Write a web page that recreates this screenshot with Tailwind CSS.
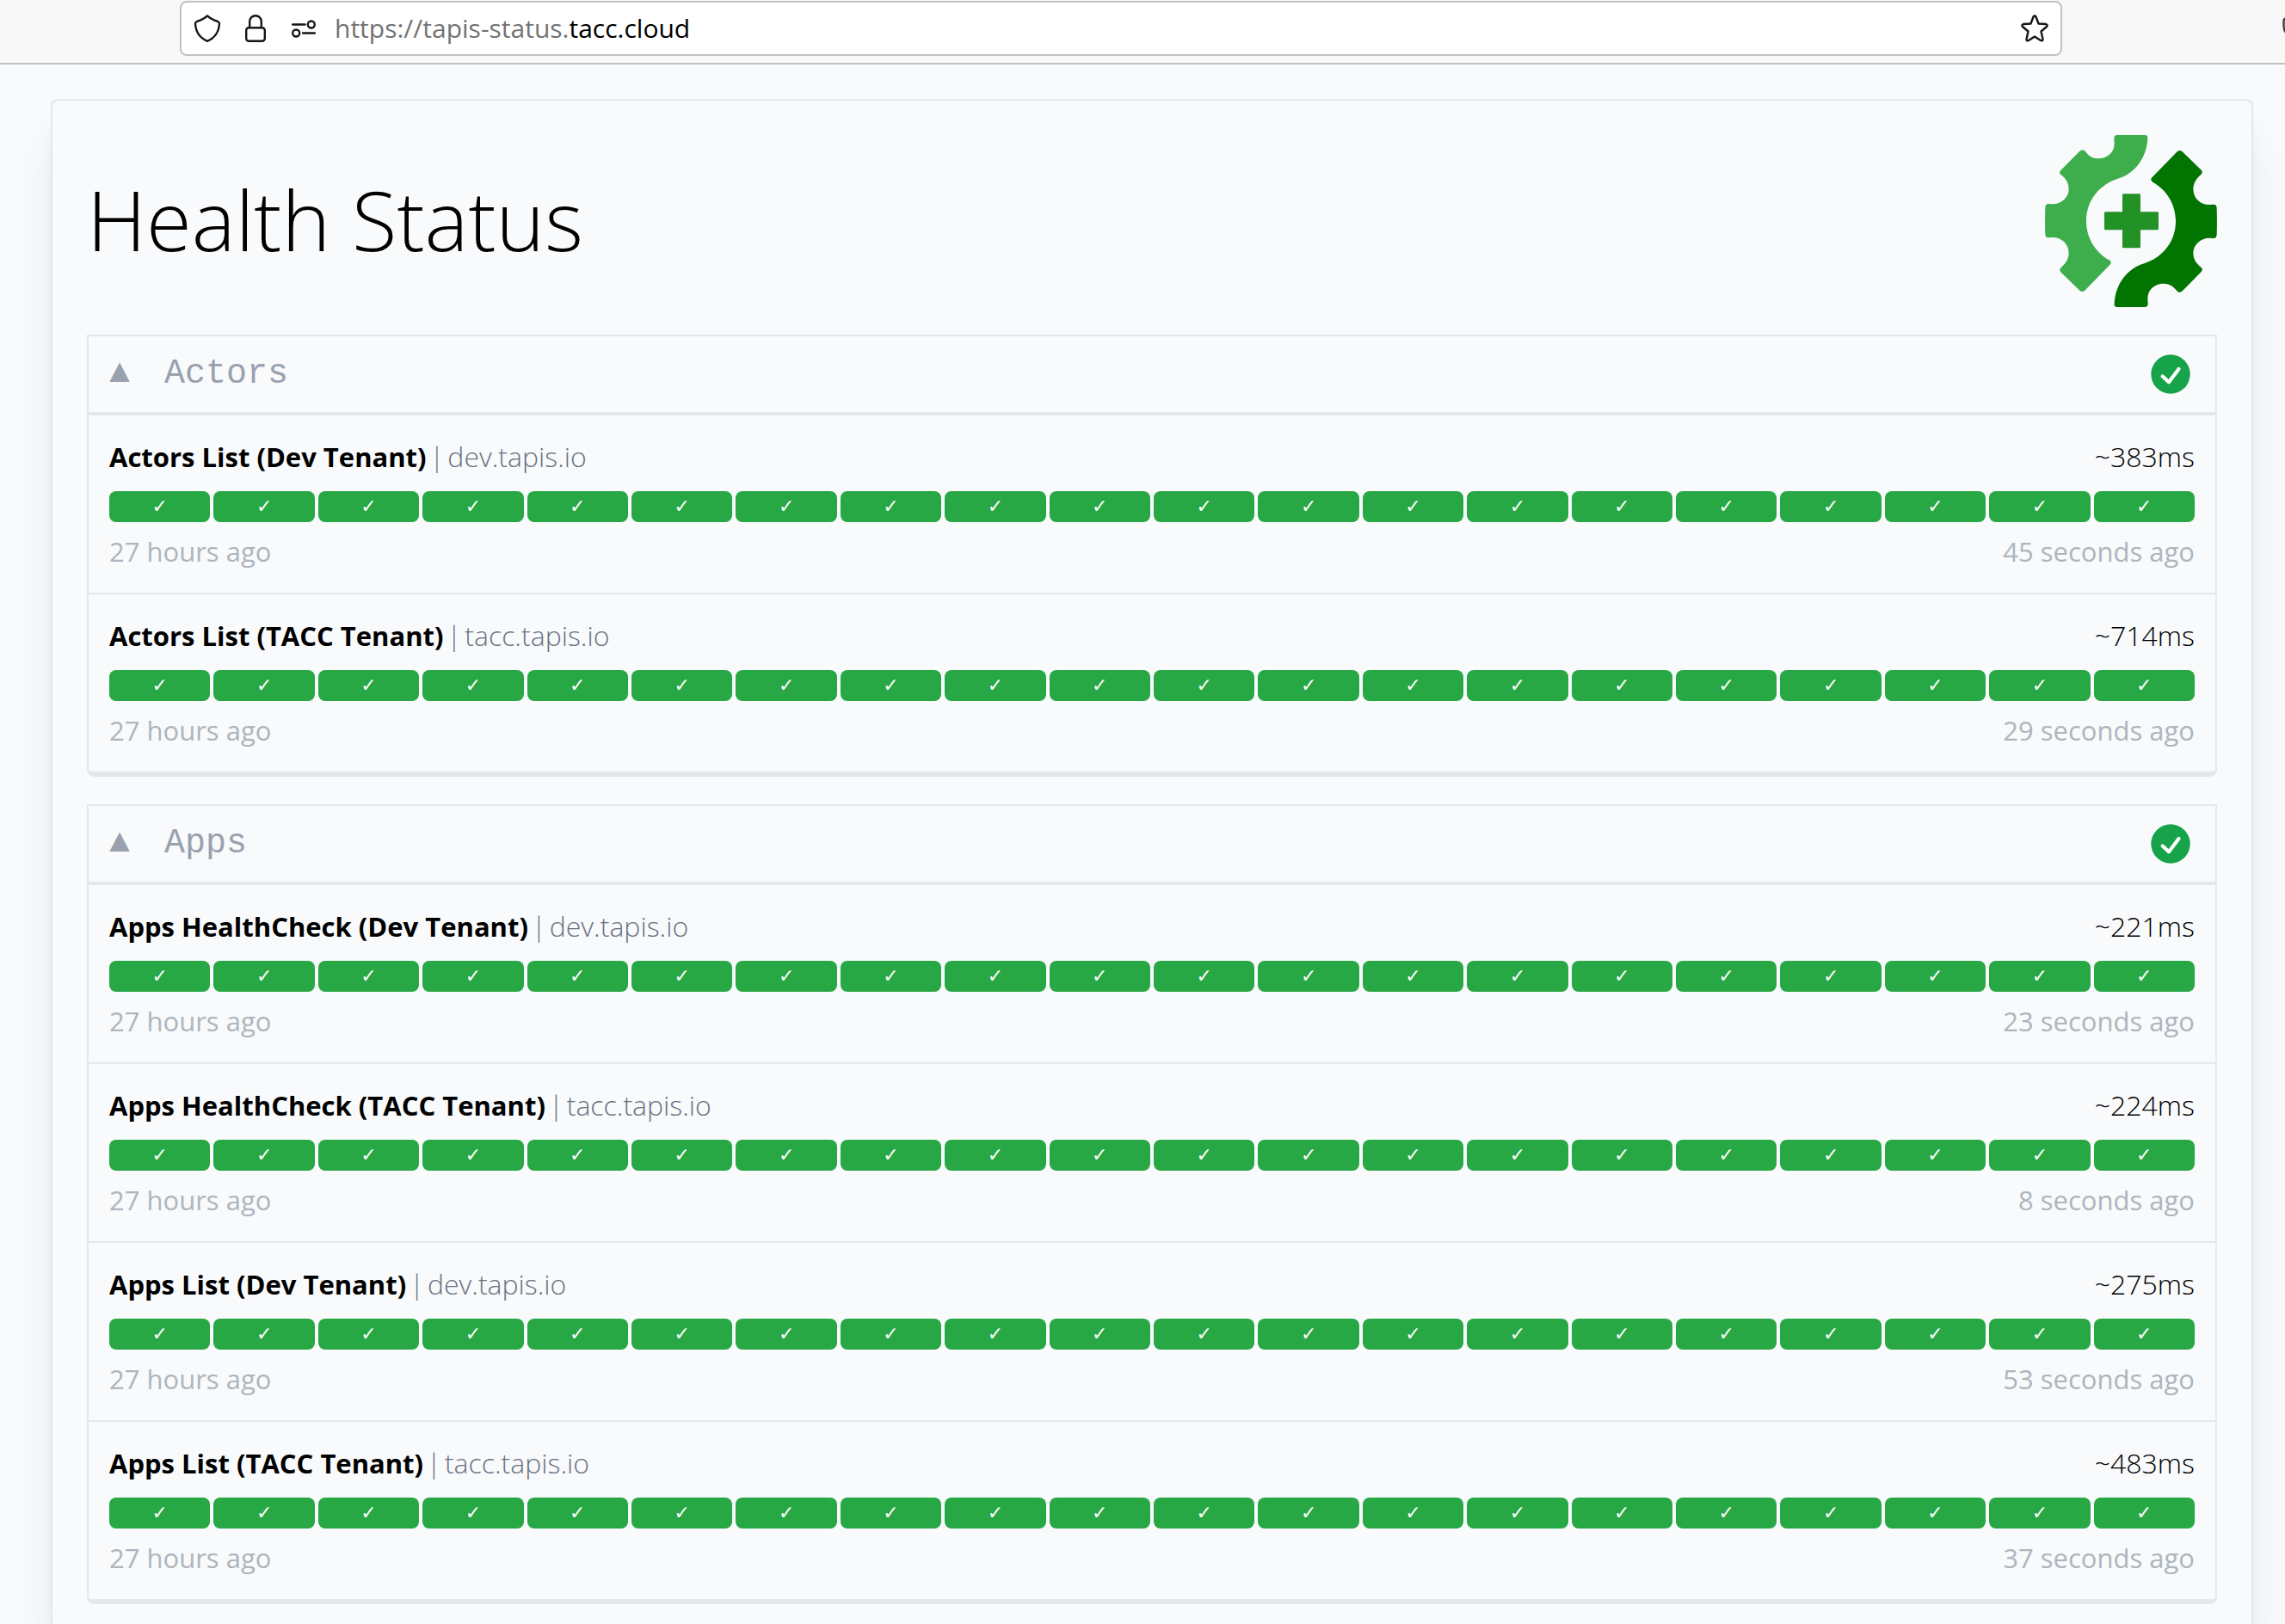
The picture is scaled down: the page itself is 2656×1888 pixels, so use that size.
<!DOCTYPE html>
<html lang="en">
<head>
<meta charset="utf-8">
<title>Health Status</title>
<script src="https://cdn.jsdelivr.net/npm/@tailwindcss/browser@4"></script>
</head>
<body class="min-h-screen bg-[#f8fafc] font-['Open_Sans',sans-serif] text-black overflow-x-hidden">
<header class="flex h-[75px] items-start border-b-2 border-[#c2c2c2] bg-[#f8f8f8] pt-px pl-[209px]">
  <div class="mr-64 flex h-16 grow items-center rounded-lg border-2 border-[#c2c2c2] bg-white px-[14px]">
    <button type="button" aria-label="Tracking protection" class="mr-7"><svg class="block h-8 w-8" viewBox="0 0 32 32" fill="none" stroke="#15141a" stroke-width="2.4" stroke-linejoin="round"><path d="M16 1.300C12 5 8 6.500 3.500 8.200Q2 9 2 10.500C2.500 19 7 27 16 30.800C25 27 29.500 19 30 10.500Q30 9 28.500 8.200C24 6.500 20 5 16 1.300Z"/></svg></button>
    <button type="button" aria-label="Site information" class="mr-[30px]"><svg class="block h-8 w-6" viewBox="0 0 24 32" fill="none" stroke="#15141a" stroke-width="2.4"><rect x="1.200" y="15.200" width="21.600" height="15.600" rx="3"/><path d="M5.200 15V8a6.800 6.800 0 0 1 13.600 0v7"/></svg></button>
    <button type="button" aria-label="Permissions" class="mr-[22px]"><svg class="block h-8 w-7" viewBox="0 0 28 32" fill="none" stroke="#15141a" stroke-width="2.400" stroke-linecap="round"><path d="M1.200 11.500H15.500M13 21.500H27"/><circle cx="22.800" cy="11.500" r="4"/><circle cx="5.200" cy="21.500" r="4"/></svg></button>
    <a href="https://tapis-status.tacc.cloud" class="grow text-3xl leading-10 text-[#737373]">https://tapis-status.<span class="text-black">tacc.cloud</span></a>
    <button type="button" aria-label="Bookmark this page"><svg class="block h-8 w-8" viewBox="0 0 32 32" fill="none" stroke="#15141a" stroke-width="2.4" stroke-linejoin="round"><path d="M14.500 2.500Q16 .5 17.500 2.500L20.500 10.500L29 11Q31.500 12 30 14L23.500 19.500L25.500 28.500Q25.500 31 23 30L16 25.500L9 30Q6.500 31 6.500 28.500L8.500 19.500L2 14Q.5 12 3 11L11.500 10.500Z"/></svg></button>
  </div>
  <button type="button" aria-label="Save to Pocket" class="mt-4 w-[3px] overflow-hidden"><svg class="block h-8 w-8 max-w-none" viewBox="0 0 32 32" fill="none" stroke="#3d3d42" stroke-width="2.4"><path d="M5 4.500H27Q30.500 4.500 30.500 8V13A14.500 14.500 0 0 1 1.500 13V8Q1.500 4.500 5 4.500Z"/></svg></button>
</header>

<main class="pt-10 pr-[37px] pl-[59px]">
  <div class="rounded-t-lg border-2 border-b-0 border-[#e5e7eb] p-10 pb-[23px] shadow-[0_40px_50px_-10px_rgba(0,0,0,0.1),0_16px_20px_-12px_rgba(0,0,0,0.1)]">
    <div class="mb-8 flex items-center justify-between">
      <h1 class="pb-1 text-8xl font-[340]">Health Status</h1>
      <svg class="h-[200px] w-[200px]" viewBox="81 51 600 600" aria-hidden="true">
        <defs><path id="half-gear" d="M322 62Q322 51 333 51H430Q440 51 439 62C436 130 395 185 335 203C270 224 225 280 225 350C225 410 257 460 305 487Q315 493 309 502L220 593Q211 601 202 593L135 528Q130 520 137 513C150 502 164 485 164 463C164 430 138 408 108 408L92 409Q82 409 82 396C81 370 81 330 82 303Q83 290 94 291L108 292C138 292 164 268 164 240C164 215 150 200 137 190Q128 183 136 174L202 107Q212 98 221 107C232 122 245 133 267 133C298 133 323 112 323 82Z"/></defs>
        <use href="#half-gear" fill="#3eae4d"/>
        <use href="#half-gear" fill="#027400" transform="rotate(180 381 351)"/>
        <path fill="#229126" d="M355 256H410Q414 256 414 260V319H473Q477 319 477 323V378Q477 382 473 382H414V441Q414 445 410 445H355Q351 445 351 441V382H292Q288 382 288 378V323Q288 319 292 319H351V260Q351 256 355 256Z"/>
      </svg>
    </div>
    <div id="groups" class="flex flex-col gap-8"></div>
  </div>
</main>

<script>
const groups = [
  { name: 'Actors', checks: [
    ['Actors List (Dev Tenant)', 'dev.tapis.io', 383, 45],
    ['Actors List (TACC Tenant)', 'tacc.tapis.io', 714, 29]] },
  { name: 'Apps', checks: [
    ['Apps HealthCheck (Dev Tenant)', 'dev.tapis.io', 221, 23],
    ['Apps HealthCheck (TACC Tenant)', 'tacc.tapis.io', 224, 8],
    ['Apps List (Dev Tenant)', 'dev.tapis.io', 275, 53],
    ['Apps List (TACC Tenant)', 'tacc.tapis.io', 483, 37]] }
];
const bars = Array.from({ length: 20 }, () => `<li class="flex h-9 items-center justify-center rounded-lg bg-[#28a745] font-['DejaVu_Sans',sans-serif] text-[22px] leading-none text-white">✓</li>`).join('');
const row = ([title, host, ms, ago]) => `
  <article class="p-6">
    <div class="flex justify-between text-[31px] leading-12 font-[340]">
      <h3 class="flex gap-1"><strong class="font-bold">${title}</strong> <span class="text-gray-500">|</span> <span class="text-[32px] text-gray-500">${host}</span></h3>
      <span class="text-[32px]">~${ms}ms</span>
    </div>
    <ol class="mt-4 mb-[10px] grid grid-cols-20 gap-1">${bars}</ol>
    <div class="flex justify-between text-[31px] leading-12 text-[#adb5bd]"><span>27 hours ago</span><span>${ago} seconds ago</span></div>
  </article>`;
document.getElementById('groups').innerHTML = groups.map(g => `
  <section class="rounded-b-lg border-2 border-b-6 border-[#e5e7eb]">
    <button type="button" aria-expanded="true" class="flex w-full items-center justify-between border-b-4 border-[#e5e7eb] px-6 py-4 font-['Liberation_Mono',monospace] text-[40px] leading-14 text-gray-400">
      <span class="flex gap-10"><span>▲</span><span>${g.name}</span></span>
      <svg class="h-14 w-14" viewBox="0 0 56 56" fill="none"><circle cx="28" cy="28" r="22.700" fill="#16a34a"/><path d="M18.700 30.500L26 37.300L37.500 22" stroke="#fff" stroke-width="4.200" stroke-linecap="round" stroke-linejoin="round"/></svg>
    </button>
    <div class="divide-y-2 divide-[#e5e7eb]">${g.checks.map(row).join('')}</div>
  </section>`).join('');
</script>
</body>
</html>
